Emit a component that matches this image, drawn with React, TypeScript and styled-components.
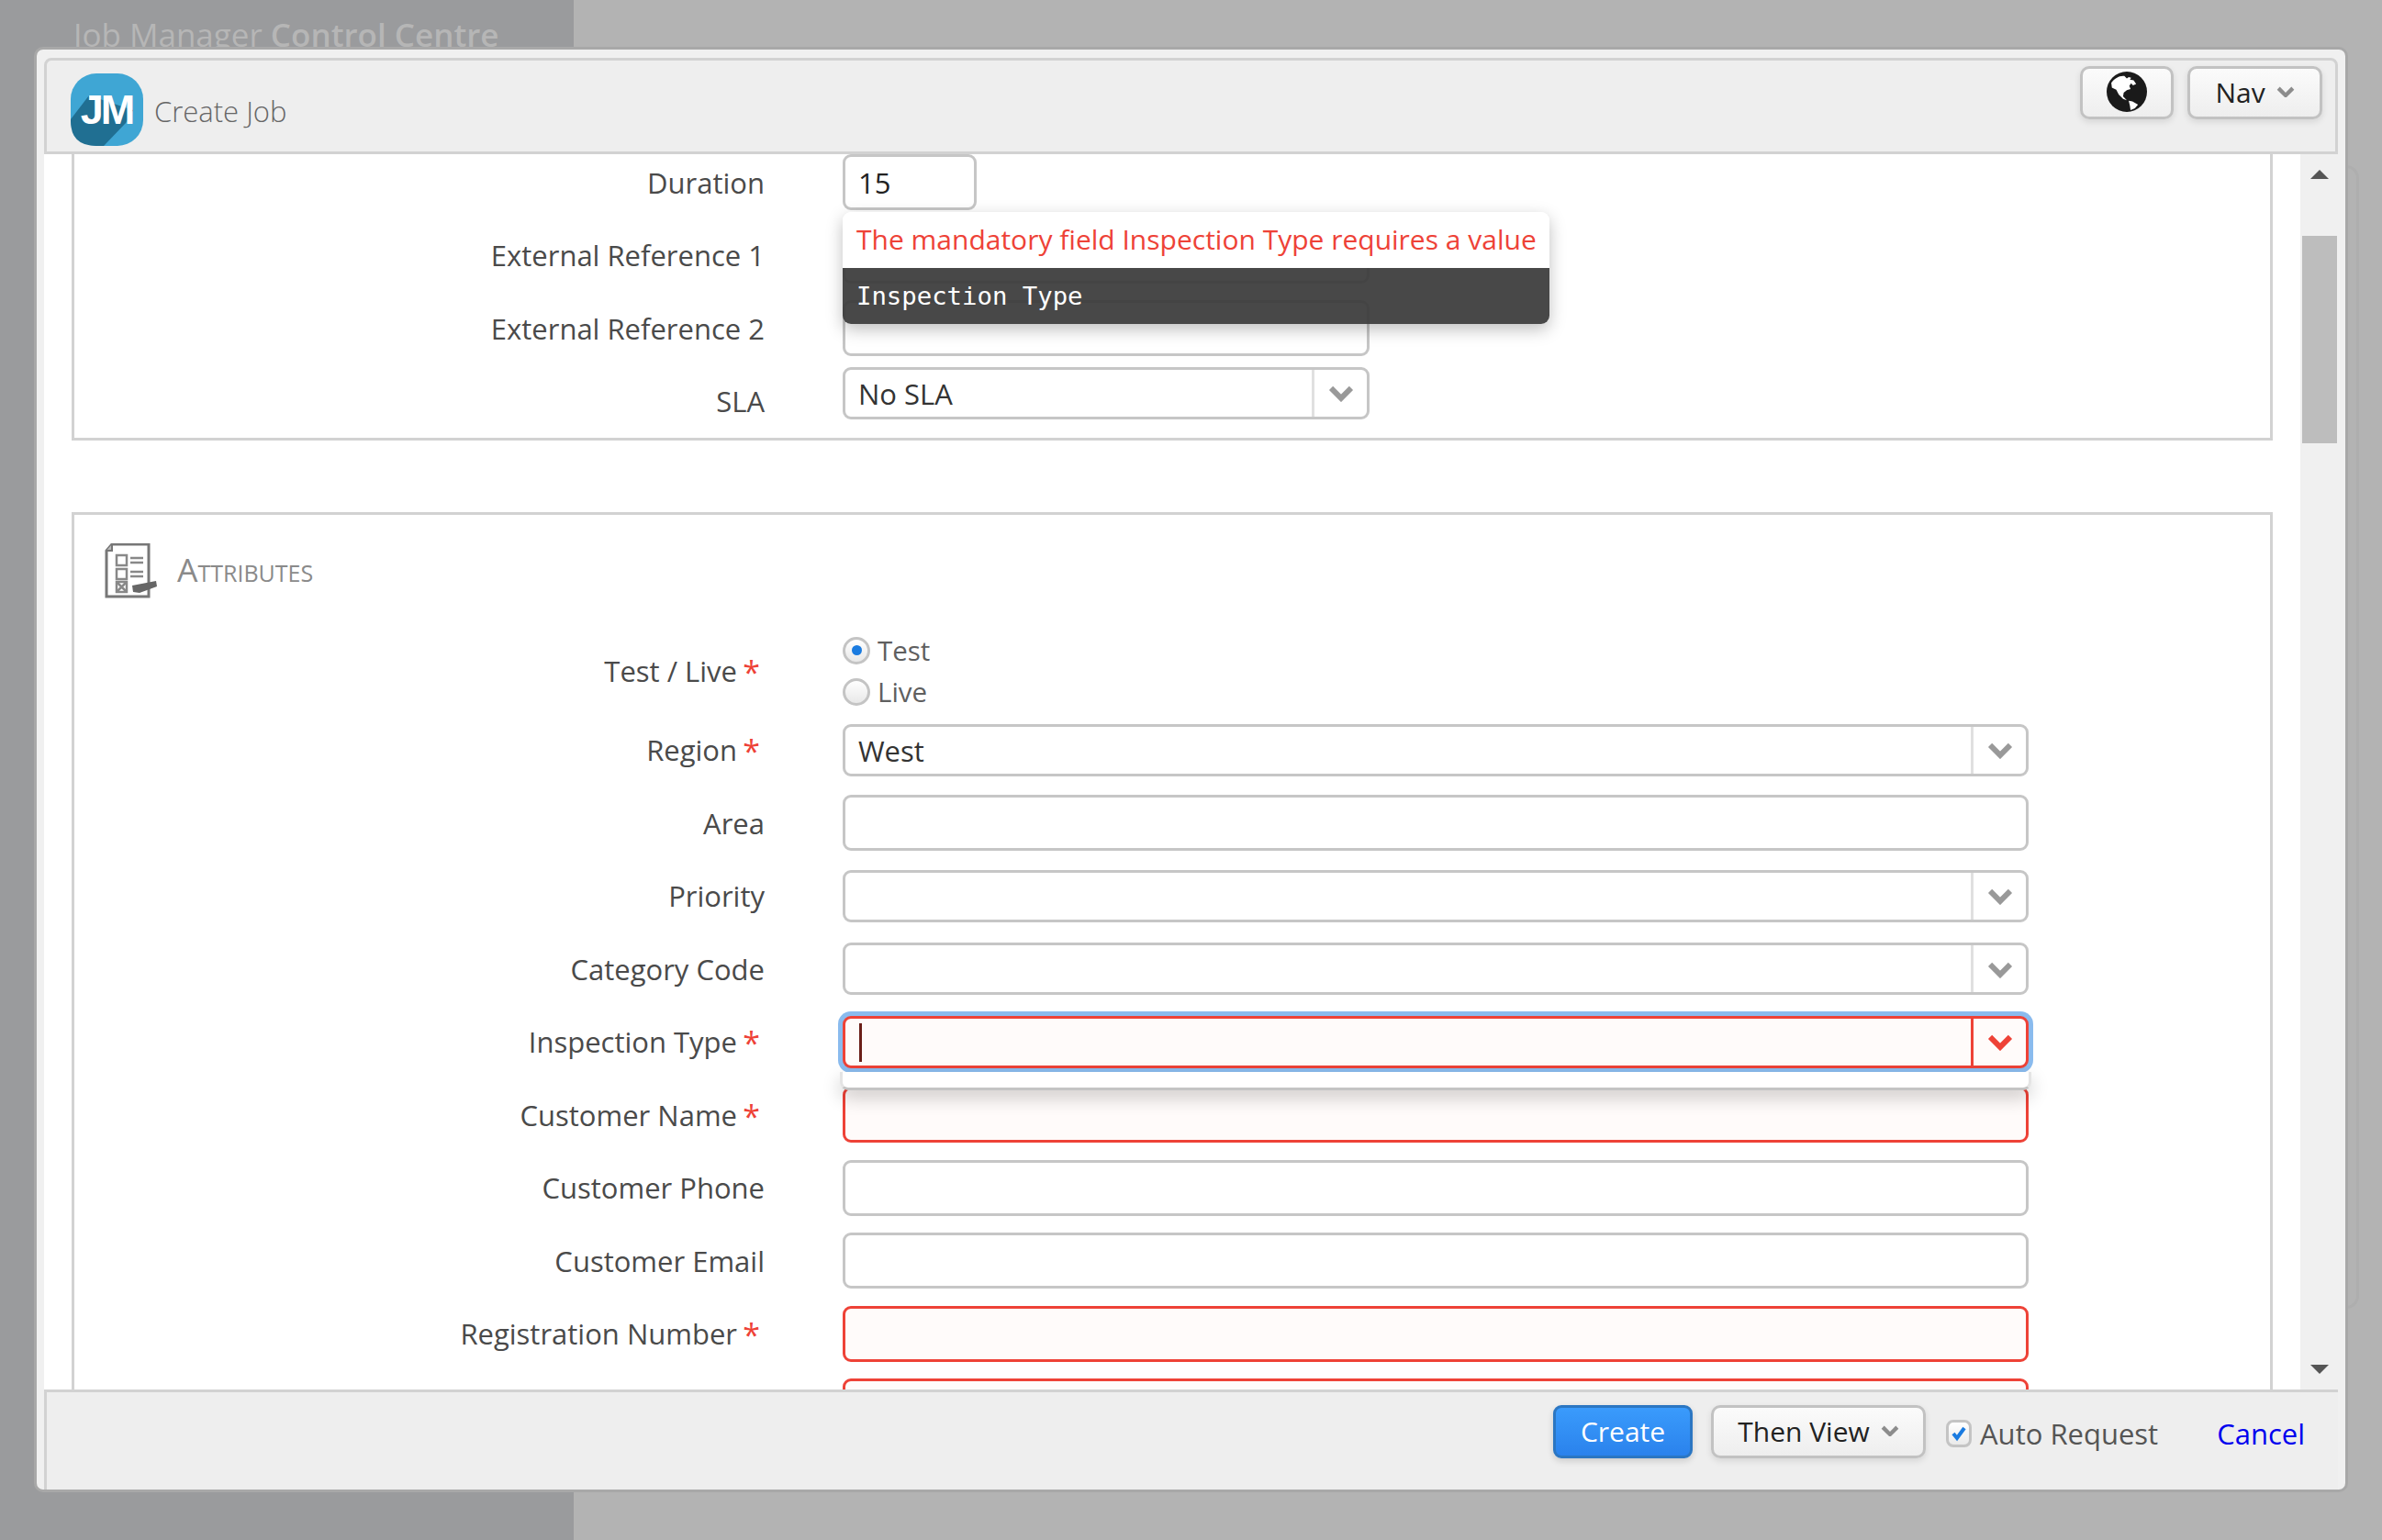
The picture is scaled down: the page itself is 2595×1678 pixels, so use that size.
import React from 'react';
import styled, { createGlobalStyle } from 'styled-components';

const GlobalStyle = createGlobalStyle`
  html, body {
    margin: 0;
    padding: 0;
    overflow: hidden;
    font-family: "Open Sans", "Liberation Sans", sans-serif;
  }
`;

const Page = styled.div`
  position: relative;
  display: grid;
  grid-template-columns: 625px 1fr;
  width: 2595px;
  height: 1678px;
  overflow: hidden;
`;

const SideColumn = styled.div`
  background: #9a9b9d;
  padding: 14px 0 0 80px;
`;

const AppTitle = styled.div`
  color: #b6b6b6;
  font-size: 35px;
  line-height: 48px;
  font-weight: 400;
  white-space: nowrap;

  b {
    font-weight: 600;
  }
`;

const MainColumn = styled.div`
  background: #b3b3b3;
  padding: 180px 25px 0 0;
`;

const GhostCard = styled.div`
  height: 1240px;
  border: 3px solid #aeaeae;
  border-radius: 14px;
`;

const Dialog = styled.div`
  position: absolute;
  left: 37px;
  top: 51px;
  box-sizing: border-box;
  display: flex;
  flex-direction: column;
  width: 2521px;
  height: 1575px;
  padding: 9px 8px 0 8px;
  background: #f0f0f0;
  border: 3px solid #a8a8a8;
  border-radius: 10px;
`;

const DialogHeader = styled.header`
  box-sizing: border-box;
  flex: 0 0 105px;
  display: flex;
  align-items: flex-start;
  padding: 6px 14px 0 26px;
  background: #eeeeee;
  border: 3px solid #d2d2d2;
  border-radius: 8px 8px 0 0;
`;

const LogoMark = styled.svg`
  width: 79px;
  height: 79px;
  margin-top: 8px;
  flex: none;
`;

const DialogTitle = styled.div`
  margin: 27px 0 0 12px;
  color: #666666;
  font-size: 31px;
  line-height: 44px;
  font-weight: 300;
`;

const HeaderActions = styled.div`
  display: flex;
  gap: 15px;
  margin-left: auto;
`;

const ToolButton = styled.button<{ $width: number }>`
  box-sizing: border-box;
  display: flex;
  align-items: center;
  justify-content: center;
  gap: 12px;
  width: ${(p) => p.$width}px;
  height: 58px;
  padding: 0 0 2px;
  font-family: inherit;
  font-size: 30px;
  color: #222222;
  background: linear-gradient(#fbfbfb, #eeeeee);
  border: 3px solid #c2c2c2;
  border-radius: 10px;
  box-shadow: 0 3px 7px rgba(0, 0, 0, 0.1);
`;

const DialogBody = styled.div`
  flex: 1;
  display: flex;
  min-height: 0;
  margin-right: 1px;
`;

const ScrollPane = styled.div`
  flex: 1;
  overflow: hidden;
  padding: 0 30px 0 30px;
  background: #ffffff;
`;

const ScrollContent = styled.div`
  margin-top: -9px;
`;

const Section = styled.section<{ $open?: boolean }>`
  box-sizing: border-box;
  border: 3px solid #d2d2d2;
  ${(p) => (p.$open ? 'border-top: none;' : '')}
`;

const SectionSpacer = styled.div`
  height: 78px;
`;

const SectionHead = styled.div`
  display: flex;
  align-items: center;
  height: 60px;
  margin: 31px 0 33px 33px;
`;

const SectionIcon = styled.svg`
  width: 58px;
  height: 60px;
  flex: none;
`;

const SectionTitle = styled.h3`
  margin: 0 0 3px 21px;
  color: #8a8a8a;
  font-size: 35.5px;
  font-weight: 400;
  font-variant: small-caps;
`;

const Row = styled.div<{ $height?: number }>`
  display: flex;
  align-items: center;
  height: ${(p) => p.$height ?? 79.5}px;
`;

const Label = styled.div<{ $required?: boolean }>`
  box-sizing: border-box;
  flex: 0 0 752px;
  margin-right: 85px;
  padding-right: ${(p) => (p.$required ? 30 : 0)}px;
  position: relative;
  text-align: right;
  color: #4a4a4a;
  font-size: 31px;
  white-space: nowrap;
`;

const Star = styled.span`
  position: absolute;
  right: 5px;
  top: -1px;
  color: #ee4237;
  font-size: 34px;
`;

const Cell = styled.div<{ $top?: boolean }>`
  position: relative;
  ${(p) => (p.$top ? 'align-self: flex-start; margin-top: 2px;' : '')}
`;

const TextField = styled.div<{ $width?: number; $error?: boolean }>`
  box-sizing: border-box;
  width: ${(p) => p.$width ?? 1292}px;
  height: 61px;
  padding-left: 14px;
  line-height: 56px;
  font-size: 31px;
  color: #222222;
  background: ${(p) => (p.$error ? '#fffbfa' : '#ffffff')};
  border: 3px solid ${(p) => (p.$error ? '#ee4237' : '#c6c6c6')};
  border-radius: 9px;
`;

const SelectField = styled.div<{ $width?: number; $error?: boolean; $focused?: boolean }>`
  box-sizing: border-box;
  display: flex;
  width: ${(p) => p.$width ?? 1292}px;
  height: 57px;
  background: ${(p) => (p.$error ? '#fffbfa' : '#ffffff')};
  border: 3px solid ${(p) => (p.$error ? '#ee4237' : '#c6c6c6')};
  border-radius: 9px;
  ${(p) => (p.$focused ? 'box-shadow: 0 0 0 5px #8abbee;' : '')}
`;

const SelectValue = styled.div`
  flex: 1;
  padding-left: 14px;
  line-height: 52px;
  font-size: 31px;
  color: #333333;
`;

const Caret = styled.div`
  width: 3px;
  height: 42px;
  margin: 5px 0 0 1px;
  background: #6b1f18;
`;

const SelectArrow = styled.div<{ $error?: boolean }>`
  flex: 0 0 57px;
  display: flex;
  align-items: center;
  justify-content: center;
  padding-top: 2px;
  border-left: ${(p) => (p.$error ? '3px solid #ee4237' : '3px solid #e0e0e0')};
`;

const DropdownStrip = styled.div`
  position: absolute;
  z-index: 2;
  left: -3px;
  right: -3px;
  top: 61px;
  box-sizing: border-box;
  height: 20px;
  background: #ffffff;
  border: 3px solid #e4e4e4;
  border-top: none;
  border-bottom-color: #c4c4c4;
  border-radius: 0 0 9px 9px;
  box-shadow: 0 8px 20px rgba(0, 0, 0, 0.2);
`;

const ErrorTip = styled.div`
  position: absolute;
  z-index: 3;
  left: 0;
  top: calc(100% + 2px);
  width: 770px;
  border-radius: 9px;
  overflow: hidden;
  box-shadow: 0 6px 18px rgba(0, 0, 0, 0.25);
`;

const ErrorMessage = styled.div`
  height: 61px;
  padding-left: 15px;
  line-height: 60px;
  background: #ffffff;
  color: #ee4237;
  font-size: 30px;
  white-space: nowrap;
`;

const ErrorField = styled.div`
  height: 61px;
  padding-left: 15px;
  line-height: 62px;
  background: rgba(58, 58, 58, 0.93);
  color: #ffffff;
  font-family: "DejaVu Sans Mono", "Liberation Mono", monospace;
  font-size: 27.3px;
  white-space: nowrap;
`;

const RadioGroup = styled.div`
  display: flex;
  flex-direction: column;
`;

const RadioOption = styled.div`
  display: flex;
  align-items: center;
  gap: 8px;
  height: 45px;
  color: #5f5f5f;
  font-size: 29.5px;
`;

const RadioCircle = styled.span<{ $checked?: boolean }>`
  box-sizing: border-box;
  display: flex;
  align-items: center;
  justify-content: center;
  width: 30px;
  height: 30px;
  background: linear-gradient(#ffffff, #e8e8e8);
  border: 3px solid #c4c4c4;
  border-radius: 50%;

  &::after {
    content: '';
    display: ${(p) => (p.$checked ? 'block' : 'none')};
    width: 11px;
    height: 11px;
    background: #1a7be0;
    border-radius: 50%;
  }
`;

const Scrollbar = styled.div`
  flex: 0 0 40px;
  display: flex;
  flex-direction: column;
  align-items: flex-end;
  padding: 17px 0;
  box-sizing: border-box;
  background: #f0f0f0;
`;

const ScrollArrow = styled.div<{ $down?: boolean }>`
  width: 0;
  height: 0;
  margin-right: 9px;
  border-left: 10px solid transparent;
  border-right: 10px solid transparent;
  ${(p) =>
    p.$down
      ? 'border-top: 10px solid #555555; margin-top: auto;'
      : 'border-bottom: 10px solid #555555;'}
`;

const ScrollThumb = styled.div`
  width: 38px;
  height: 226px;
  margin-top: 62px;
  background: #bdbdbd;
`;

const DialogFooter = styled.footer`
  box-sizing: border-box;
  flex: 0 0 109px;
  display: flex;
  align-items: flex-start;
  justify-content: flex-end;
  padding: 14px 36px 0 0;
  background: #eeeeee;
  border-top: 3px solid #d2d2d2;
  border-left: 3px solid #d2d2d2;
`;

const CreateButton = styled.button`
  box-sizing: border-box;
  width: 152px;
  height: 58px;
  padding: 0 0 2px;
  font-family: inherit;
  font-size: 30px;
  color: #ffffff;
  background: linear-gradient(#3a9bfc, #2a82ec);
  border: 3px solid #2b76c2;
  border-radius: 9px;
  box-shadow: 0 3px 7px rgba(0, 0, 0, 0.15);
`;

const ThenViewButton = styled(ToolButton)`
  margin-left: 20px;
`;

const CheckOption = styled.div`
  display: flex;
  align-items: center;
  height: 62px;
  margin-left: 22px;
  color: #555555;
  font-size: 31px;
`;

const CheckBox = styled.span`
  box-sizing: border-box;
  display: flex;
  align-items: center;
  justify-content: center;
  width: 28px;
  height: 30px;
  margin-right: 9px;
  background: linear-gradient(#ffffff, #eaeaea);
  border: 3px solid #c4c4c4;
  border-radius: 8px;
`;

const CancelLink = styled.a`
  margin: 10px 0 0 64px;
  color: #0000ee;
  font-size: 31px;
  line-height: 42px;
`;

function Chevron({ color = '#999999', size = 28 }: { color?: string; size?: number }) {
  return (
    <svg width={size} height={size * 0.64} viewBox="0 0 28 18">
      <polyline points="3,3 14,14 25,3" fill="none" stroke={color} strokeWidth="6" />
    </svg>
  );
}

function Logo() {
  return (
    <LogoMark viewBox="0 0 79 79">
      <rect width="79" height="79" rx="28" fill="#3fa6d4" />
      <path d="M0 50 L20 24 L68 40 L60 54 L36 79 L28 79 Q0 79 0 52 Z" fill="#206f92" />
      <text
        x="39"
        y="55"
        textAnchor="middle"
        fill="#ffffff"
        fontFamily="Liberation Sans"
        fontWeight="700"
        fontSize="45"
        letterSpacing="-3"
      >
        JM
      </text>
    </LogoMark>
  );
}

function GlobeIcon() {
  return (
    <svg width="44" height="44" viewBox="15 32 130 130">
      <circle cx="80" cy="97" r="65" fill="#1a1a1a" />
      <path
        d="M30 68 C40 54 56 44 72 46 L80 54 L86 50 L94 52 L90 58 L102 60 L110 72 L100 76 L94 70 L88 78 L92 88 L80 92 L70 100 L68 112 L80 124 L68 120 L54 106 L46 90 L32 84 Z"
        fill="#ffffff"
      />
      <path d="M86 126 L98 128 L116 138 L106 150 L92 156 L90 142 Z" fill="#ffffff" />
    </svg>
  );
}

function AttributesIcon() {
  return (
    <SectionIcon viewBox="0 0 58 60">
      <path d="M8 1 H48 V58 H2 V8 Z" fill="#ffffff" stroke="#777777" strokeWidth="3" />
      <path d="M2 8 H8 V1" fill="#bbbbbb" stroke="#777777" strokeWidth="2" />
      <g fill="none" stroke="#888888" strokeWidth="2.5">
        <rect x="13" y="13" width="11" height="11" />
        <rect x="13" y="28" width="11" height="11" />
        <rect x="13" y="42" width="11" height="11" />
        <path d="M13 42 L24 53 M24 42 L13 53" />
        <path d="M28 16 H42 M28 21 H42 M28 31 H42 M28 36 H42" />
      </g>
      <path d="M30 46 L56 41 L57 47 L38 54 L31 53 Z" fill="#666666" />
    </SectionIcon>
  );
}

interface FieldRowProps {
  readonly label?: string;
  readonly required?: boolean;
  readonly error?: boolean;
}

function FieldLabel({ label, required }: FieldRowProps) {
  return (
    <Label $required={required}>
      {label}
      {required && <Star>*</Star>}
    </Label>
  );
}

function InputRow(props: FieldRowProps) {
  return (
    <Row>
      <FieldLabel {...props} />
      <Cell>
        <TextField $error={props.error} />
      </Cell>
    </Row>
  );
}

function SelectRow({ value, ...props }: FieldRowProps & { readonly value?: string }) {
  return (
    <Row>
      <FieldLabel {...props} />
      <Cell>
        <SelectField>
          <SelectValue>{value}</SelectValue>
          <SelectArrow>
            <Chevron />
          </SelectArrow>
        </SelectField>
      </Cell>
    </Row>
  );
}

export default function App() {
  return (
    <Page>
      <GlobalStyle />
      <SideColumn>
        <AppTitle>
          Job Manager <b>Control Centre</b>
        </AppTitle>
      </SideColumn>
      <MainColumn>
        <GhostCard />
      </MainColumn>
      <Dialog>
        <DialogHeader>
          <Logo />
          <DialogTitle>Create Job</DialogTitle>
          <HeaderActions>
            <ToolButton $width={102}>
              <GlobeIcon />
            </ToolButton>
            <ToolButton $width={147}>
              Nav
              <Chevron color="#8c8c8c" size={20} />
            </ToolButton>
          </HeaderActions>
        </DialogHeader>
        <DialogBody>
          <ScrollPane>
            <ScrollContent>
              <Section $open>
                <Row>
                  <FieldLabel label="Duration" />
                  <Cell>
                    <TextField $width={146}>15</TextField>
                    <ErrorTip>
                      <ErrorMessage>The mandatory field Inspection Type requires a value</ErrorMessage>
                      <ErrorField>Inspection Type</ErrorField>
                    </ErrorTip>
                  </Cell>
                </Row>
                <Row>
                  <FieldLabel label="External Reference 1" />
                  <Cell>
                    <TextField $width={574} />
                  </Cell>
                </Row>
                <Row>
                  <FieldLabel label="External Reference 2" />
                  <Cell>
                    <TextField $width={574} />
                  </Cell>
                </Row>
                <Row $height={79}>
                  <FieldLabel label="SLA" />
                  <Cell $top>
                    <SelectField $width={574}>
                      <SelectValue>No SLA</SelectValue>
                      <SelectArrow>
                        <Chevron />
                      </SelectArrow>
                    </SelectField>
                  </Cell>
                </Row>
              </Section>
              <SectionSpacer />
              <Section>
                <SectionHead>
                  <AttributesIcon />
                  <SectionTitle>Attributes</SectionTitle>
                </SectionHead>
                <Row $height={93}>
                  <FieldLabel label="Test / Live" required />
                  <RadioGroup>
                    <RadioOption>
                      <RadioCircle $checked />
                      Test
                    </RadioOption>
                    <RadioOption>
                      <RadioCircle />
                      Live
                    </RadioOption>
                  </RadioGroup>
                </Row>
                <SelectRow label="Region" required value="West" />
                <InputRow label="Area" />
                <SelectRow label="Priority" />
                <SelectRow label="Category Code" />
                <Row>
                  <FieldLabel label="Inspection Type" required />
                  <Cell>
                    <SelectField $error $focused>
                      <SelectValue>
                        <Caret />
                      </SelectValue>
                      <SelectArrow $error>
                        <Chevron color="#ee4237" />
                      </SelectArrow>
                    </SelectField>
                    <DropdownStrip />
                  </Cell>
                </Row>
                <InputRow label="Customer Name" required error />
                <InputRow label="Customer Phone" />
                <InputRow label="Customer Email" />
                <InputRow label="Registration Number" required error />
                <InputRow error />
              </Section>
            </ScrollContent>
          </ScrollPane>
          <Scrollbar>
            <ScrollArrow />
            <ScrollThumb />
            <ScrollArrow $down />
          </Scrollbar>
        </DialogBody>
        <DialogFooter>
          <CreateButton>Create</CreateButton>
          <ThenViewButton $width={234}>
            Then View
            <Chevron color="#8c8c8c" size={20} />
          </ThenViewButton>
          <CheckOption>
            <CheckBox>
              <svg width="18" height="18" viewBox="0 0 18 18">
                <polyline points="3,9 7,14 15,3" fill="none" stroke="#1a7be0" strokeWidth="4" />
              </svg>
            </CheckBox>
            Auto Request
          </CheckOption>
          <CancelLink>Cancel</CancelLink>
        </DialogFooter>
      </Dialog>
    </Page>
  );
}
